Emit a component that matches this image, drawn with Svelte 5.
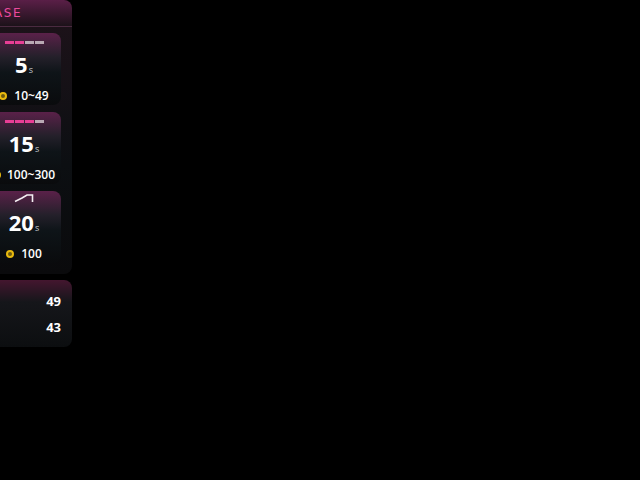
<script lang="ts">
	const modes = [
		{ kind: 'bars', lit: 2, value: 5, coin: '10~49', gap: 7 },
		{ kind: 'bars', lit: 3, value: 15, coin: '100~300', gap: 6 },
		{ kind: 'stairs', lit: 0, value: 20, coin: '100', gap: 7 }
	];
	const stats = [49, 43];
</script>

<div class="stage">
	<section class="panel modes">
		<header class="title"><span>PHASE</span></header>
		<div class="list">
			{#each modes as m}
				<article class="card">
					<div class="top">
						{#if m.kind === 'bars'}
							<div class="bars">
								{#each [0, 1, 2, 3] as i}
									<i class:lit={i < m.lit}></i>
								{/each}
							</div>
						{:else}
							<svg class="stairs" width="20" height="10" viewBox="0 0 20 10">
								<path d="M1 8.5 L8 5 L13 2 H18.5 V9" fill="none" stroke="#f4eef2" stroke-width="1.6" />
							</svg>
						{/if}
					</div>
					<div class="time">{m.value}<small>s</small></div>
					<div class="price" style="gap: {m.gap}px"><b class="coin"></b>{m.coin}</div>
				</article>
			{/each}
		</div>
	</section>

	<section class="panel scores">
		{#each stats as s}
			<div class="row">{s}</div>
		{/each}
	</section>
</div>

<style>
	:global(body) {
		margin: 0;
		background: #000;
	}

	.stage {
		width: 96px;
		height: 480px;
		margin-left: -24px;
		font-family: "Open Sans", "Noto Sans", sans-serif;
		color: #fff;
		overflow: hidden;
	}

	.panel {
		border-radius: 0 8px 8px 0;
		background: linear-gradient(180deg, #5a1f47 0, #1c1219 26px, #0c0f12 60%, #0a0a0c 100%);
	}

	.modes {
		height: 274px;
		box-sizing: border-box;
	}

	.title {
		height: 27px;
		display: flex;
		justify-content: flex-end;
		align-items: center;
		padding-right: 50px;
		box-sizing: border-box;
		border-bottom: 1px solid #4a2a40;
		color: #ec4a9f;
		font-family: "DejaVu Sans", sans-serif;
		font-size: 12px;
		letter-spacing: 1.5px;
	}

	.list {
		display: flex;
		flex-direction: column;
		gap: 7px;
		padding: 6px 11px 0;
	}

	.card {
		height: 72px;
		border-radius: 8px;
		background: linear-gradient(180deg, #5a2149 0, #24202a 24px, #0e1418 55%, #0a0b0d 100%);
		display: flex;
		flex-direction: column;
		align-items: center;
	}

	.top {
		height: 20px;
		display: flex;
		align-items: center;
		justify-content: center;
	}

	.bars {
		display: flex;
		gap: 1px;
		margin-top: 0;
	}

	.bars i {
		width: 9px;
		height: 3px;
		background: #b9a9b4;
	}

	.bars i.lit {
		background: #e83e95;
	}

	.stairs {
		margin-top: -4px;
	}

	.time {
		font-size: 22px;
		font-weight: 700;
		line-height: 26px;
	}

	.time small {
		font-size: 9px;
		font-weight: 400;
		margin-left: 1px;
		color: #c8ccd0;
	}

	.price {
		display: flex;
		align-items: center;
		font-size: 12px;
		font-weight: 600;
		line-height: 18px;
		margin-top: 4px;
	}

	.coin {
		width: 4px;
		height: 4px;
		border: 2px solid #e8b90e;
		border-radius: 50%;
		background: #6b5a10;
	}

	.scores {
		margin-top: 6px;
		height: 67px;
		padding: 8px 11px 0;
		box-sizing: border-box;
		background: linear-gradient(180deg, #44162f 0, #15161a 22px, #0c0e10 100%);
	}

	.row {
		text-align: right;
		font-size: 13px;
		font-weight: 700;
		line-height: 26px;
	}
</style>
